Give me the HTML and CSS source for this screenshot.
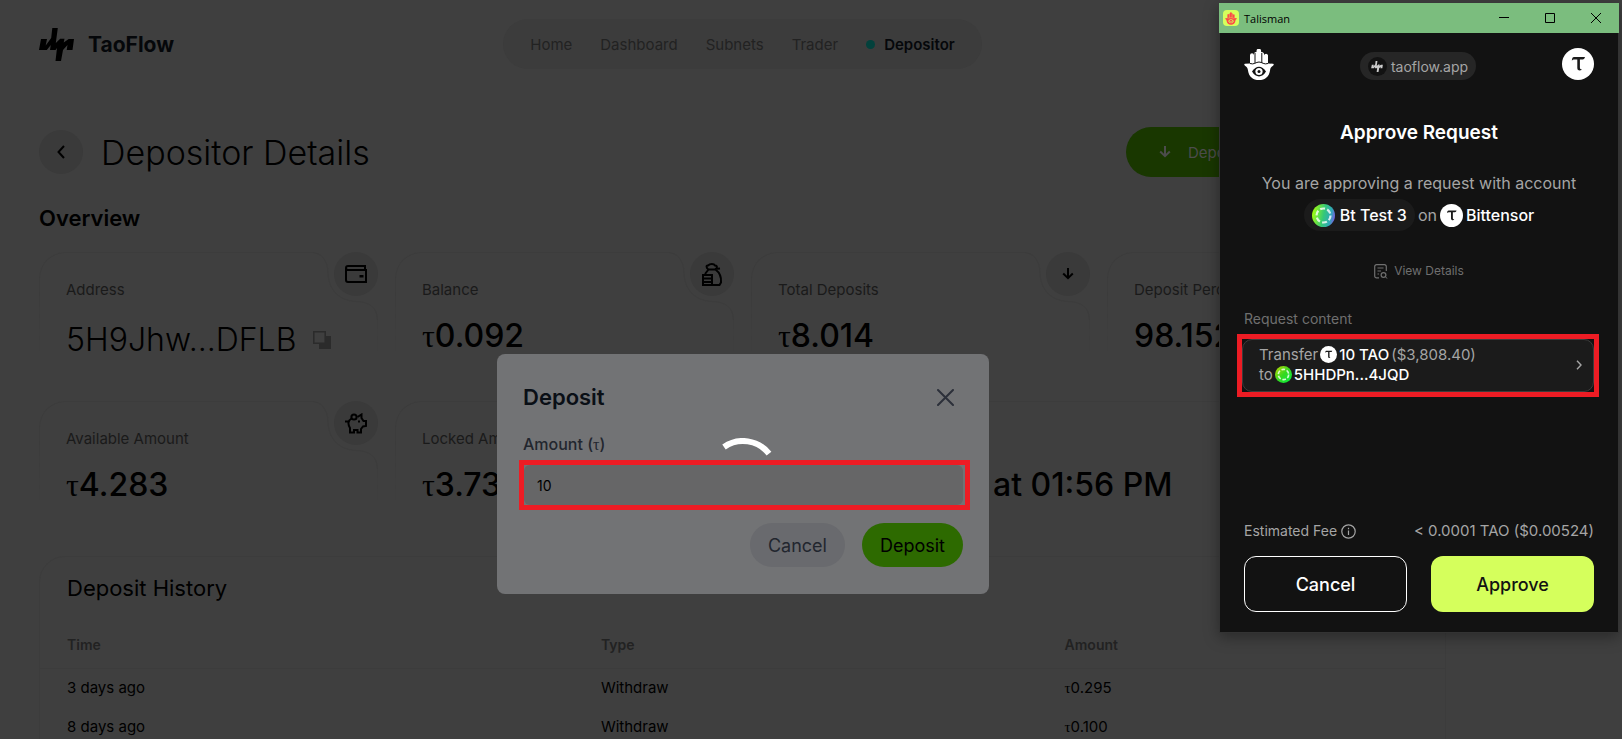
FILE: index.html
```html
<!DOCTYPE html>
<html lang="en">
<head>
    <meta charset="UTF-8">
    <meta name="viewport" content="width=device-width, initial-scale=1.0">
    <title>TaoFlow - Depositor Details</title>
    <link rel="stylesheet" href="styles.css">
</head>
<body>
    <!-- Shared shapes -->
    <svg class="sprite" aria-hidden="true">
        <symbol id="flow" viewBox="0 0 35 33">
            <path d="M2 11h6L6.700 17.500 12.200 10 13.300 0h5.500L16.800 15l4.400-4.200h4.300l-.8 3.700 5-3.500H35L33.500 22h-5.800l.8-5-4.500 5L22 33h-5.500L18 20l-1.500 2H11l.8-5-4 5H0z"/>
        </symbol>
        <symbol id="hand" viewBox="0 0 30 31">
            <path fill="currentColor" d="M6 14.500V6.200a2 2 0 0 1 4 0V5a2 2 0 0 1 .6-1.500 2 2 0 0 1 1.900-.5V2a2.300 2.300 0 0 1 4.600 0v1.200a2.200 2.200 0 0 1 3 2v1a2 2 0 0 1 3.900 0v8.300l5 .2c1 .2 1 1.300 0 2-2.200 1.500-2.600 2.300-2.900 4.200C25.300 27.600 21 31 15 31S4.700 27.600 3.900 20.900C3.600 19 3.200 18.200 1 16.700c-1-.7-1-1.800 0-2z"/>
            <path class="hand-line" fill="none" d="M11 4v10M17.800 4v10M6 14.500c4 1.500 6-1.500 9-1.500s5 3 9 1.500"/>
            <path class="hand-eye" d="M8 22.500c4-6.500 10-6.500 14 0-4 6.500-10 6.500-14 0z"/>
            <circle fill="currentColor" cx="15" cy="22.500" r="3.600"/>
            <circle class="hand-eye" cx="15" cy="22.500" r="1.500"/>
        </symbol>
        <symbol id="tau" viewBox="0 0 32 32">
            <circle cx="16" cy="16" r="16" fill="#fff"/>
            <path fill="#1a1a1a" d="M12 9h11c-.4 1.600-1 2.400-2.400 2.400h-2.700v8.200c0 1.500.8 1.900 2 2-.8 1.200-4.600 1.700-4.600-1.500v-8.700H12.500c-1.200 0-2 .4-2.700 1.200C10 10 10.800 9 12 9z"/>
        </symbol>
        <symbol id="arrow-down" viewBox="0 0 12 12">
            <path fill="none" stroke="currentColor" stroke-width="2" d="M6 0v10M1.200 5.500 6 10.200l4.800-4.700"/>
        </symbol>
        <symbol id="notch" viewBox="0 0 66 68">
            <path fill="#3f3f3f" d="M0 0h66v68h-1c0-12-8-18-20-18.500C26 49 17 37 16 22 15.500 8 8 1 0 .5z"/>
            <path fill="none" stroke="#3c3c3c" d="M0 .5c9 0 15.500 7 16 20.500.5 17 11 27.500 28 28.500 13 0 21.500 6 21.500 18.500"/>
        </symbol>
    </svg>

    <div class="page">
        <header class="topbar">
            <a class="brand" href="#">
                <svg width="35" height="33"><use href="#flow"/></svg>
                TaoFlow
            </a>
            <nav class="menu">
                <a href="#">Home</a>
                <a href="#">Dashboard</a>
                <a href="#">Subnets</a>
                <a href="#">Trader</a>
                <a class="active" href="#">Depositor</a>
            </nav>
        </header>

        <div class="title-row">
            <button class="round" aria-label="Back">
                <svg width="8" height="14" viewBox="0 0 8 14"><path fill="none" stroke="#000" stroke-width="2" d="M7 1 1.500 7 7 13"/></svg>
            </button>
            <h1>Depositor Details</h1>
            <button class="deposit-btn">
                <svg width="12" height="12"><use href="#arrow-down"/></svg>
                Deposit
            </button>
        </div>

        <h2>Overview</h2>

        <div class="cards">
            <div class="card">
                <svg class="notch"><use href="#notch"/></svg>
                <span class="round badge">
                    <svg width="22" height="18" viewBox="0 0 22 18"><path fill="none" stroke="#000" stroke-width="2" d="M20 5V1H3a2 2 0 0 0 0 4h18v12H3a2 2 0 0 1-2-2V3"/><path d="M14.500 10h4v2.500h-4z"/></svg>
                </span>
                <div class="label">Address</div>
                <div class="value address">5H9Jhw...DFLB
                    <button class="copy" aria-label="Copy address">
                        <svg width="18" height="18" viewBox="0 0 18 18"><path fill="#2b2b2b" d="M13 5h5v13H6v-5h7z"/><path fill="none" stroke="#2b2b2b" stroke-width="1.500" d="M.8.8h11.400v11.400H.8z"/></svg>
                    </button>
                </div>
            </div>
            <div class="card">
                <svg class="notch"><use href="#notch"/></svg>
                <span class="round badge">
                    <svg width="22" height="23" viewBox="0 0 22 23"><path fill="none" stroke="#000" stroke-width="2" d="M7.500 6.500C5 5 5 2 7 2.500 9 .5 13 .5 14 2.500c2.500 0 2.500 2.500.5 4zM7.500 6.500 4 11M14.500 6.500c4 3 6 8 5.500 13L18.500 22H2V12h9v10M2 15.500h9M2 19h9M14 6l5-.500"/></svg>
                </span>
                <div class="label">Balance</div>
                <div class="value"><span class="tau">τ</span>0.092</div>
            </div>
            <div class="card">
                <svg class="notch"><use href="#notch"/></svg>
                <span class="round badge">
                    <svg width="12" height="12"><use href="#arrow-down"/></svg>
                </span>
                <div class="label">Total Deposits</div>
                <div class="value"><span class="tau">τ</span>8.014</div>
            </div>
            <div class="card">
                <div class="label">Deposit Percentage</div>
                <div class="value">98.152%</div>
            </div>
            <div class="card">
                <svg class="notch"><use href="#notch"/></svg>
                <span class="round badge">
                    <svg width="22" height="21" viewBox="0 0 22 21"><path fill="none" stroke="#000" stroke-width="2" d="M0 8.500h3.500M6.500 5.500C3 7.500 2.500 11 5 15v4.500h4V17h3.500v2.500h3.500V16l2-2.500 3-.5V8h-2.500L16.500 5V1.500L12.500 4"/><circle cx="9" cy="4" r="2.600" fill="none" stroke="#000" stroke-width="2"/><path d="M13 7.500h2v2h-2z"/></svg>
                </span>
                <div class="label">Available Amount</div>
                <div class="value"><span class="tau">τ</span>4.283</div>
            </div>
            <div class="card">
                <div class="label">Locked Amount</div>
                <div class="value"><span class="tau">τ</span>3.73</div>
            </div>
            <div class="card wide">
                <div class="value">at 01:56 PM</div>
            </div>
        </div>

        <section class="history">
            <h3>Deposit History</h3>
            <table>
                <thead>
                    <tr>
                        <th>Time</th>
                        <th>Type</th>
                        <th>Amount</th>
                    </tr>
                </thead>
                <tbody>
                    <tr>
                        <td>3 days ago</td>
                        <td>Withdraw</td>
                        <td><span class="tau">τ</span>0.295</td>
                    </tr>
                    <tr>
                        <td>8 days ago</td>
                        <td>Withdraw</td>
                        <td><span class="tau">τ</span>0.100</td>
                    </tr>
                </tbody>
            </table>
        </section>
    </div>

    <!-- Deposit dialog -->
    <div class="modal-layer">
        <form class="modal">
            <div class="modal-head">
                <h2>Deposit</h2>
                <button type="button" class="close" aria-label="Close">
                    <svg width="17" height="17" viewBox="0 0 17 17"><path fill="none" stroke="#2c303a" stroke-width="2" stroke-linecap="round" d="m1 1 15 15M16 1 1 16"/></svg>
                </button>
            </div>
            <label for="amount">Amount (<span class="tau">τ</span>)</label>
            <div class="mark mark-input">
                <input type="text" id="amount" value="10">
            </div>
            <div class="modal-actions">
                <button type="button" class="cancel">Cancel</button>
                <button type="submit" class="submit">Deposit</button>
            </div>
            <svg class="spinner" width="72" height="72" viewBox="0 0 72 72"><path fill="none" stroke="#fff" stroke-width="6" d="M17 9A33 33 0 0 1 62 15.700"/></svg>
        </form>
    </div>

    <!-- Wallet popup -->
    <div class="wallet">
        <div class="titlebar">
            <span class="app-icon"><svg width="12" height="13"><use href="#hand"/></svg></span>
            <span class="app-name">Talisman</span>
            <button aria-label="Minimize"><svg width="10" height="10"><path stroke="#000" d="M0 4.500h10"/></svg></button>
            <button aria-label="Maximize"><svg width="10" height="10"><path fill="none" stroke="#000" d="M.5.5h9v9h-9z"/></svg></button>
            <button aria-label="Close window"><svg width="10" height="10"><path stroke="#000" d="m0 0 10 10M10 0 0 10"/></svg></button>
        </div>
        <div class="wallet-body">
            <div class="wallet-head">
                <svg width="30" height="31"><use href="#hand"/></svg>
                <span class="site">
                    <span class="site-icon"><svg width="12" height="11"><use href="#flow"/></svg></span>
                    taoflow.app
                </span>
                <svg width="32" height="32"><use href="#tau"/></svg>
            </div>
            <h2>Approve Request</h2>
            <p class="intro">You are approving a request with account</p>
            <div class="account-row">
                <span class="account">
                    <svg width="23" height="23" viewBox="0 0 23 23">
                        <defs>
                            <linearGradient id="g1" x1="0" y1=".4" x2="1" y2=".6"><stop offset="0" stop-color="#a4ff0c"/><stop offset=".5" stop-color="#35c878"/><stop offset=".8" stop-color="#2fa9b8"/><stop offset="1" stop-color="#7a5ce0"/></linearGradient>
                            <linearGradient id="g2" x1="0" y1="0" x2="1" y2="1"><stop offset="0" stop-color="#c8d800"/><stop offset=".5" stop-color="#35d820"/><stop offset="1" stop-color="#00f040"/></linearGradient>
                        </defs>
                        <circle cx="11.500" cy="11.500" r="11.500" fill="url(#g1)"/>
                        <circle cx="11.500" cy="11.500" r="7" fill="none" stroke="#fff" stroke-opacity=".8" stroke-width="2.200" stroke-dasharray="5 2.330"/>
                    </svg>
                    Bt Test 3
                </span>
                on
                <svg width="23" height="23"><use href="#tau"/></svg>
                <strong>Bittensor</strong>
            </div>
            <a class="details" href="#">
                <svg width="14" height="15" viewBox="0 0 14 15"><path fill="none" stroke="currentColor" stroke-width="1.200" d="M5 13.800H2.500A1.800 1.800 0 0 1 .7 12V2.500A1.800 1.800 0 0 1 2.500.7h8a1.800 1.800 0 0 1 1.800 1.800V7M3.500 4h6M3.500 7H7M3.500 10H5"/><circle cx="9.500" cy="11" r="2.400" fill="none" stroke="currentColor" stroke-width="1.200"/><path stroke="currentColor" d="m11.300 12.800 2 1.700"/></svg>
                View Details
            </a>
            <div class="request-label">Request content</div>
            <div class="mark mark-request">
                <button class="request">
                    <span class="request-text">
                        <span class="line">Transfer <svg width="17" height="17"><use href="#tau"/></svg> <strong>10 TAO</strong> ($3,808.40)</span>
                        <span class="line">to <svg width="17" height="17" viewBox="0 0 23 23"><circle cx="11.500" cy="11.500" r="11.500" fill="url(#g2)"/><circle cx="11.500" cy="11.500" r="7" fill="none" stroke="#fff" stroke-opacity=".8" stroke-width="2.200" stroke-dasharray="5 2.330"/></svg> <strong>5HHDPn...4JQD</strong></span>
                    </span>
                    <svg width="6" height="10" viewBox="0 0 6 10"><path fill="none" stroke="#a5a5a5" stroke-width="1.400" d="m1 .7 4 4.300-4 4.300"/></svg>
                </button>
            </div>
            <div class="fee">
                <span class="fee-name">Estimated Fee
                    <svg width="15" height="15" viewBox="0 0 15 15"><circle cx="7.500" cy="7.500" r="6.700" fill="none" stroke="currentColor" stroke-width="1.200"/><path stroke="currentColor" stroke-width="1.200" d="M7.500 6.500V11M7.500 3.800v1.400"/></svg>
                </span>
                <span>&lt; 0.0001 TAO ($0.00524)</span>
            </div>
            <div class="wallet-actions">
                <button class="reject">Cancel</button>
                <button class="approve">Approve</button>
            </div>
        </div>
    </div>
</body>
</html>
```
FILE: styles.css
```css
* {
    box-sizing: border-box;
}
body {
    margin: 0;
    height: 100vh;
    overflow: hidden;
    background-color: #3f3f3f;
    color: #000;
    font-family: Inter, "Liberation Sans", sans-serif;
    font-size: 15px;
}
h1, h2, h3, p {
    margin: 0;
}
button {
    border: 0;
    padding: 0;
    background: none;
    font: inherit;
    color: inherit;
    cursor: pointer;
}
a {
    color: inherit;
    text-decoration: none;
}
svg {
    flex: none;
}
.sprite {
    display: none;
}
.hand-eye {
    fill: var(--eye, #121212);
}
.hand-line {
    stroke: var(--eye, #121212);
}
.tau {
    font-family: "Liberation Serif", serif;
    font-weight: 400;
}

/* page */
.page {
    padding: 19px 176px 0 39px;
}
.topbar {
    display: grid;
    grid-template-columns: 1fr auto 1fr;
    align-items: center;
}
.brand {
    display: flex;
    align-items: center;
    gap: 14px;
    font-size: 21px;
    font-weight: 700;
    color: #05070a;
}
.menu {
    display: flex;
    align-items: center;
    gap: 28px;
    height: 50px;
    padding: 0 27px;
    border-radius: 25px;
    background-color: #3c3c3c;
    color: #222;
}
.menu .active {
    display: flex;
    align-items: center;
    gap: 9px;
    font-weight: 600;
    color: #05070a;
}
.active::before {
    content: "";
    width: 9px;
    height: 9px;
    border-radius: 50%;
    background-color: #03413c;
}
.title-row {
    display: flex;
    align-items: center;
    gap: 18px;
    margin-top: 58px;
}
.round {
    display: flex;
    align-items: center;
    justify-content: center;
    width: 44px;
    height: 44px;
    border-radius: 50%;
    background-color: #3a3a3a;
}
h1 {
    font-size: 34px;
    font-weight: 300;
}
.deposit-btn {
    display: flex;
    align-items: center;
    gap: 17px;
    width: 320px;
    height: 50px;
    margin-left: auto;
    padding-left: 33px;
    border-radius: 25px;
    background-color: #193700;
    color: #4c4c4c;
}
.page h2 {
    margin-top: 27px;
    font-size: 22px;
    font-weight: 600;
    line-height: 28px;
}
.cards {
    display: grid;
    grid-template-columns: repeat(4, 1fr);
    gap: 17px;
    margin-top: 20px;
}
.card {
    position: relative;
    height: 132px;
    padding: 28px 27px 0;
}
.card::before {
    content: "";
    position: absolute;
    inset: 0;
    border: 1px solid #3c3c3c;
    border-bottom: 0;
    border-radius: 26px 26px 0 0;
    mask-image: linear-gradient(#000 30%, transparent 80%);
}
.notch {
    position: absolute;
    top: 0;
    right: 0;
    width: 66px;
    height: 68px;
}
.badge {
    position: absolute;
    top: 0;
    right: 0;
}
.label {
    line-height: 20px;
    color: #1a1a1a;
}
.value {
    margin-top: 15px;
    font-size: 32px;
    font-weight: 500;
    line-height: 42px;
}
.address {
    display: flex;
    align-items: center;
    gap: 17px;
    margin-top: 19px;
    font-weight: 300;
}
.copy svg {
    display: block;
}
.wide {
    grid-column: span 2;
    padding-top: 48px;
    padding-left: 242px;
}
.history {
    margin-top: 23px;
    height: 200px;
    border: 1px solid #3c3c3c;
    border-radius: 26px 26px 0 0;
}
h3 {
    padding: 17px 27px 20px;
    font-size: 22px;
    font-weight: 400;
    line-height: 28px;
}
table {
    width: 100%;
    table-layout: fixed;
    border-collapse: collapse;
}
th, td {
    height: 39px;
    padding: 0 27px;
    text-align: left;
}
th {
    height: 46px;
    border-bottom: 1px solid #3c3c3c;
    font-size: 14px;
    font-weight: 600;
    color: #222;
}
th:first-child {
    width: 38%;
}
th:last-child {
    width: 29%;
}

/* deposit dialog */
.modal-layer {
    position: absolute;
    top: 354px;
    left: 0;
    right: 136px;
    display: flex;
    justify-content: center;
}
.modal {
    position: relative;
    width: 492px;
    padding: 26px 26px 27px;
    border-radius: 8px;
    background-color: #727375;
}
.modal-head {
    display: flex;
    align-items: center;
    justify-content: space-between;
    padding-right: 9px;
}
.modal h2 {
    font-size: 22px;
    font-weight: 600;
    line-height: 34px;
    color: #0a0f16;
}
.close svg {
    display: block;
}
.modal label {
    display: block;
    margin-top: 19px;
    font-size: 16px;
    line-height: 22px;
    font-weight: 500;
    color: #22262e;
}
.mark {
    border: 5px solid #ed1c24;
}
.mark-input {
    margin: 4px -7px 0 -4px;
    padding-right: 2px;
}
.modal input {
    display: block;
    width: 100%;
    height: 40px;
    padding: 0 13px;
    border: 0;
    border-radius: 6px;
    background-color: #666667;
    font: inherit;
    font-size: 14px;
}
.modal-actions {
    display: flex;
    justify-content: flex-end;
    gap: 17px;
    margin-top: 13px;
}
.modal-actions button {
    height: 44px;
    padding: 0 18px;
    border-radius: 22px;
    font-size: 18px;
}
.cancel {
    background-color: #696a6e;
    color: #22262e;
}
.submit {
    background-color: #2d6a00;
}
.spinner {
    position: absolute;
    top: 84px;
    left: 210px;
}

/* wallet popup */
.wallet {
    position: absolute;
    top: 3px;
    right: 3px;
    width: 400px;
    border: 1px solid #333;
    border-top: 0;
    background-color: #121212;
    box-shadow: 0 4px 14px rgba(0, 0, 0, 0.35);
    color: #a5a5a5;
}
.titlebar {
    display: flex;
    align-items: center;
    height: 30px;
    margin: 0 -1px;
    padding-left: 4px;
    background-color: #7bbd7e;
    color: #000;
    font-family: "Open Sans", sans-serif;
    font-size: 11px;
}
.titlebar button {
    width: 46px;
    height: 30px;
}
.app-icon {
    --eye: #d5ff5c;
    display: flex;
    align-items: center;
    justify-content: center;
    width: 16px;
    height: 16px;
    margin-right: 5px;
    border-radius: 4px;
    background-color: #d5ff5c;
    color: #fd4848;
}
.app-name {
    margin-right: auto;
}
.wallet-body {
    display: flex;
    flex-direction: column;
    padding: 15px 24px 20px;
}
.wallet-head {
    display: flex;
    align-items: flex-end;
    justify-content: space-between;
    color: #fff;
}
.site {
    display: flex;
    align-items: center;
    gap: 4px;
    height: 28px;
    padding: 0 8px;
    border-radius: 14px;
    background-color: #262626;
    color: #a5a5a5;
    font-size: 14px;
}
.site-icon {
    display: flex;
    align-items: center;
    justify-content: center;
    width: 19px;
    height: 19px;
    border-radius: 50%;
    background-color: #121212;
    fill: #ccc;
}
.wallet h2 {
    margin-top: 39px;
    font-size: 19px;
    font-weight: 600;
    line-height: 28px;
    text-align: center;
    color: #fff;
}
.intro {
    margin-top: 24px;
    font-size: 16px;
    line-height: 24px;
    text-align: center;
}
.account-row {
    display: flex;
    align-items: center;
    justify-content: center;
    gap: 3px;
    margin-top: 4px;
    font-size: 16px;
}
.account {
    display: flex;
    align-items: center;
    gap: 5px;
    height: 32px;
    padding: 0 8px;
    border-radius: 16px;
    background-color: #1b1b1b;
    font-weight: 500;
    color: #fff;
}
.wallet strong {
    font-weight: 500;
    color: #fff;
}
.details {
    display: flex;
    align-items: center;
    justify-content: center;
    gap: 6px;
    margin-top: 30px;
    font-size: 12px;
    line-height: 20px;
    color: #6f6f6f;
}
.request-label {
    margin-top: 28px;
    font-size: 14px;
    line-height: 20px;
    color: #6f6f6f;
}
.mark-request {
    margin: 5px -5px 0 -7px;
}
.request {
    display: flex;
    align-items: center;
    justify-content: space-between;
    width: 100%;
    height: 53px;
    padding: 0 11px 2px 16px;
    border: 1px solid #3c3c3c;
    border-radius: 10px;
    background-color: #1b1b1b;
    text-align: left;
}
.line {
    display: flex;
    align-items: center;
    gap: 2px;
    line-height: 20px;
}
.fee {
    display: flex;
    justify-content: space-between;
    margin-top: 124px;
    line-height: 20px;
}
.fee-name {
    display: flex;
    align-items: center;
    gap: 4px;
    font-size: 14px;
}
.wallet-actions {
    display: grid;
    grid-template-columns: 1fr 1fr;
    gap: 24px;
    margin-top: 15px;
}
.wallet-actions button {
    height: 56px;
    border-radius: 12px;
    font-size: 18px;
    font-weight: 500;
}
.reject {
    border: 1px solid #fff;
    color: #fff;
}
.approve {
    background-color: #d5ff5c;
    color: #121212;
}
```
